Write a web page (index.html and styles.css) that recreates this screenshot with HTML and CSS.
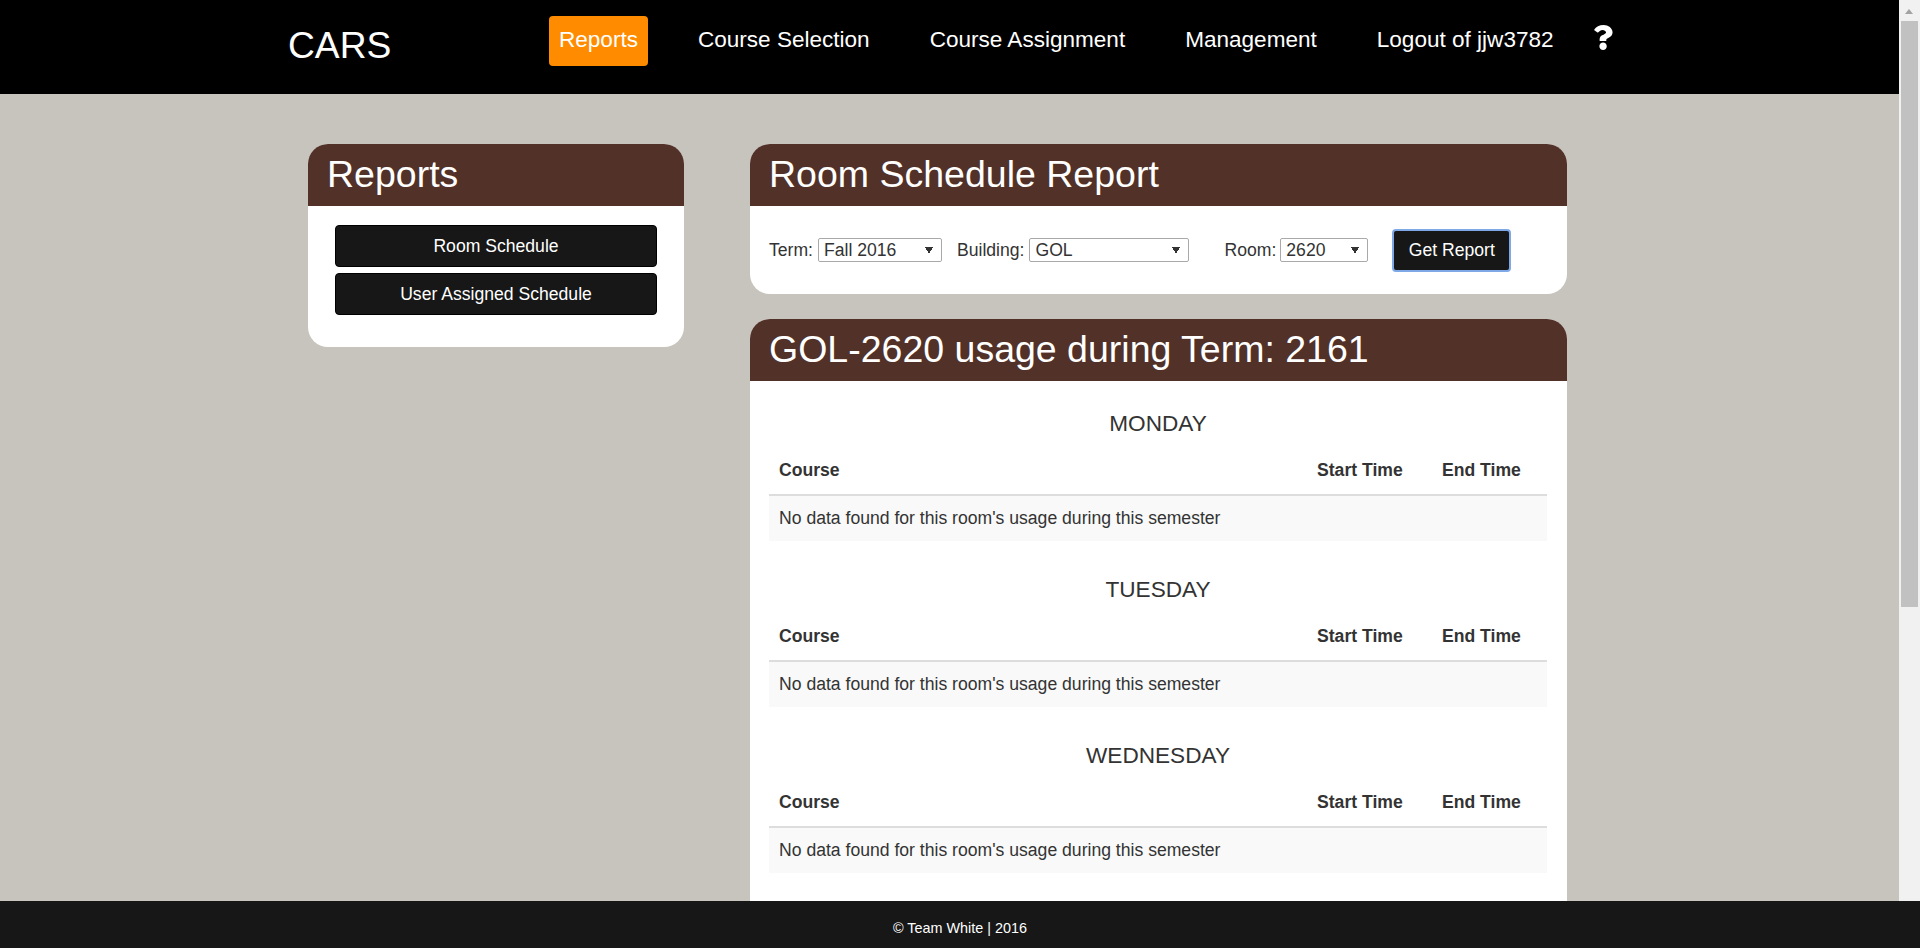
FILE: index.html
```html
<!DOCTYPE html>
<html lang="en">
<head>
<meta charset="UTF-8">
<meta name="viewport" content="width=device-width, initial-scale=1.0">
<title>CARS - Room Schedule Report</title>
<link rel="stylesheet" href="styles.css">
</head>
<body>
<div class="shell">
    <div class="page">
        <header class="topbar">
            <a class="brand" href="#">CARS</a>
            <nav class="nav">
                <a class="nav-link active" href="#">Reports</a>
                <a class="nav-link" href="#">Course Selection</a>
                <a class="nav-link" href="#">Course Assignment</a>
                <a class="nav-link" href="#">Management</a>
                <a class="nav-link" href="#">Logout of jjw3782</a>
            </nav>
            <a class="help" href="#" aria-label="Help">
                <svg viewBox="0 0 18 25" width="19" height="25" preserveAspectRatio="none"><path fill="#fff" d="M9.3 0C4.9 0 2 1.8 0 4.9l3.3 2.5c.2.2.6.1.8-.1 1.2-1.500 2.100-2.400 4-2.400 1.500 0 3.300.9 3.300 2.400 0 1.100-.9 1.600-2.300 2.400C7.400 10.100 5.300 11.300 5.300 14.200v1.200c0 .4.3.7.7.7h5c.4 0 .7-.3.7-.7v-.6c0-2 5.900-2.100 5.900-7.500C17.600 3.100 13.400 0 9.300 0zM8.600 17.500c-1.900 0-3.500 1.600-3.500 3.700s1.600 3.800 3.500 3.800 3.500-1.700 3.500-3.800-1.600-3.700-3.500-3.700z"/></svg>
            </a>
        </header>

        <main class="content">
            <aside class="panel side-panel">
                <h1 class="panel-title">Reports</h1>
                <div class="panel-body side-body">
                    <button class="btn btn-block" type="button">Room Schedule</button>
                    <button class="btn btn-block" type="button">User Assigned Schedule</button>
                </div>
            </aside>

            <div class="main-col">
                <section class="panel">
                    <h1 class="panel-title">Room Schedule Report</h1>
                    <form class="panel-body report-form">
                        <label class="field">Term:
                            <select class="select select-term"><option>Fall 2016</option></select>
                        </label>
                        <label class="field field-building">Building:
                            <select class="select select-building"><option>GOL</option></select>
                        </label>
                        <label class="field field-room">Room:
                            <select class="select select-room"><option>2620</option></select>
                        </label>
                        <button class="btn btn-focus" type="button">Get Report</button>
                    </form>
                </section>

                <section class="panel">
                    <h1 class="panel-title">GOL-2620 usage during Term: 2161</h1>
                    <div class="panel-body usage-body">
                        <div class="day">
                            <h3 class="day-name">MONDAY</h3>
                            <table class="usage">
                                <thead><tr><th>Course</th><th class="col-start">Start Time</th><th class="col-end">End Time</th></tr></thead>
                                <tbody><tr><td colspan="3">No data found for this room's usage during this semester</td></tr></tbody>
                            </table>
                        </div>
                        <div class="day">
                            <h3 class="day-name">TUESDAY</h3>
                            <table class="usage">
                                <thead><tr><th>Course</th><th class="col-start">Start Time</th><th class="col-end">End Time</th></tr></thead>
                                <tbody><tr><td colspan="3">No data found for this room's usage during this semester</td></tr></tbody>
                            </table>
                        </div>
                        <div class="day">
                            <h3 class="day-name">WEDNESDAY</h3>
                            <table class="usage">
                                <thead><tr><th>Course</th><th class="col-start">Start Time</th><th class="col-end">End Time</th></tr></thead>
                                <tbody><tr><td colspan="3">No data found for this room's usage during this semester</td></tr></tbody>
                            </table>
                        </div>
                    </div>
                </section>
            </div>
        </main>
    </div>

    <div class="scrollbar">
        <div class="scroll-arrow"></div>
        <div class="scroll-thumb"></div>
    </div>
</div>

<footer class="footer">&copy; Team White | 2016</footer>
</body>
</html>
```

FILE: styles.css
```css
* {
    box-sizing: border-box;
}
html, body {
    height: 100%;
}
body {
    margin: 0;
    display: flex;
    flex-direction: column;
    overflow: hidden;
    font-family: "Liberation Sans", Arial, sans-serif;
    font-size: 17.6px;
    color: #333;
    background-color: #f1f1f1;
}
a {
    color: #fff;
    text-decoration: none;
}

.shell {
    display: flex;
    flex: 1;
    min-height: 0;
}
.page {
    flex: 1;
    min-width: 0;
    overflow: hidden;
    background-color: #c7c4bd;
}

.scrollbar {
    flex: none;
    width: 21px;
    background-color: #f1f1f1;
}
.scroll-arrow {
    width: 0;
    height: 0;
    margin: 9px 0 0 6px;
    border-left: 4.5px solid transparent;
    border-right: 4.5px solid transparent;
    border-bottom: 5px solid #a3a3a3;
}
.scroll-thumb {
    width: 17px;
    height: 586px;
    margin: 7px 0 0 2px;
    background-color: #c1c1c1;
}

.topbar {
    display: flex;
    height: 94px;
    padding-left: 288px;
    background-color: #000;
}
.brand {
    width: 261px;
    padding-top: 23px;
    font-size: 37.2px;
    line-height: 44px;
}
.nav {
    display: flex;
    gap: 40px;
    padding-top: 16px;
}
.nav-link {
    height: 50px;
    padding: 0 10px;
    font-size: 22.56px;
    line-height: 48px;
    border-radius: 4px;
}
.nav-link.active {
    background-color: #ff8c00;
}
.help {
    margin: 25px 0 0 30px;
}

.content {
    display: flex;
    align-items: flex-start;
    gap: 66px;
    padding: 50px 0 0 308px;
}
.panel {
    overflow: hidden;
    background-color: #fff;
    border-radius: 20px;
}
.side-panel {
    width: 376px;
}
.main-col {
    display: flex;
    flex-direction: column;
    gap: 25px;
    width: 817px;
}
.panel-title {
    height: 62px;
    margin: 0;
    padding-left: 19px;
    font-size: 37.5px;
    font-weight: normal;
    line-height: 60px;
    color: #fff;
    background-color: #523128;
}

.side-body {
    display: flex;
    flex-direction: column;
    gap: 6px;
    padding: 19px 27px 32px;
}
.btn {
    height: 42px;
    padding: 0 16px;
    border: 1px solid #000;
    border-radius: 4px;
    font-family: inherit;
    font-size: 17.6px;
    color: #fff;
    background-color: #171717;
}
.btn-block {
    width: 100%;
}
.btn-focus {
    width: 119px;
    height: 43px;
    margin-left: 24px;
    padding: 0;
    border: 2px solid #7ea8e6;
}

.report-form {
    display: flex;
    align-items: center;
    height: 88px;
    padding: 0 0 0 19px;
}
.field {
    display: flex;
    align-items: center;
    gap: 5px;
}
.field-building {
    margin-left: 15px;
}
.field-room {
    gap: 4px;
    margin-left: 35px;
}
.select {
    height: 24px;
    padding: 0 0 0 5px;
    font-family: inherit;
    font-size: 17.6px;
    color: #333;
    appearance: none;
    background-color: #fff;
    /* little down triangle, the select's own arrow */
    background-image:
        linear-gradient(to top right, transparent 50%, #333 50%),
        linear-gradient(to top left, transparent 50%, #333 50%);
    background-size: 4px 7px;
    background-position: right 12px center, right 8px center;
    background-repeat: no-repeat;
    border: 1px solid #a9a9a9;
    border-radius: 2px;
}
.select-term {
    width: 124px;
}
.select-building {
    width: 160px;
}
.select-room {
    width: 88px;
}

.usage-body {
    height: 600px;
    padding: 20px 20px 0 19px;
}
.day {
    height: 166px;
}
.day-name {
    margin: 0;
    font-size: 22.6px;
    font-weight: normal;
    line-height: 46px;
    text-align: center;
}
.usage {
    width: 100%;
    border-collapse: collapse;
}
.usage th {
    height: 48px;
    padding: 0 10px;
    text-align: left;
    vertical-align: middle;
    border-bottom: 2px solid #ddd;
}
.usage td {
    height: 46px;
    padding: 0 10px;
    background-color: #f9f9f9;
}
.col-start {
    width: 125px;
}
.col-end {
    width: 115px;
}

.footer {
    flex: none;
    height: 47px;
    font-size: 14.4px;
    line-height: 54px;
    text-align: center;
    color: #fff;
    background-color: #171717;
}
```
